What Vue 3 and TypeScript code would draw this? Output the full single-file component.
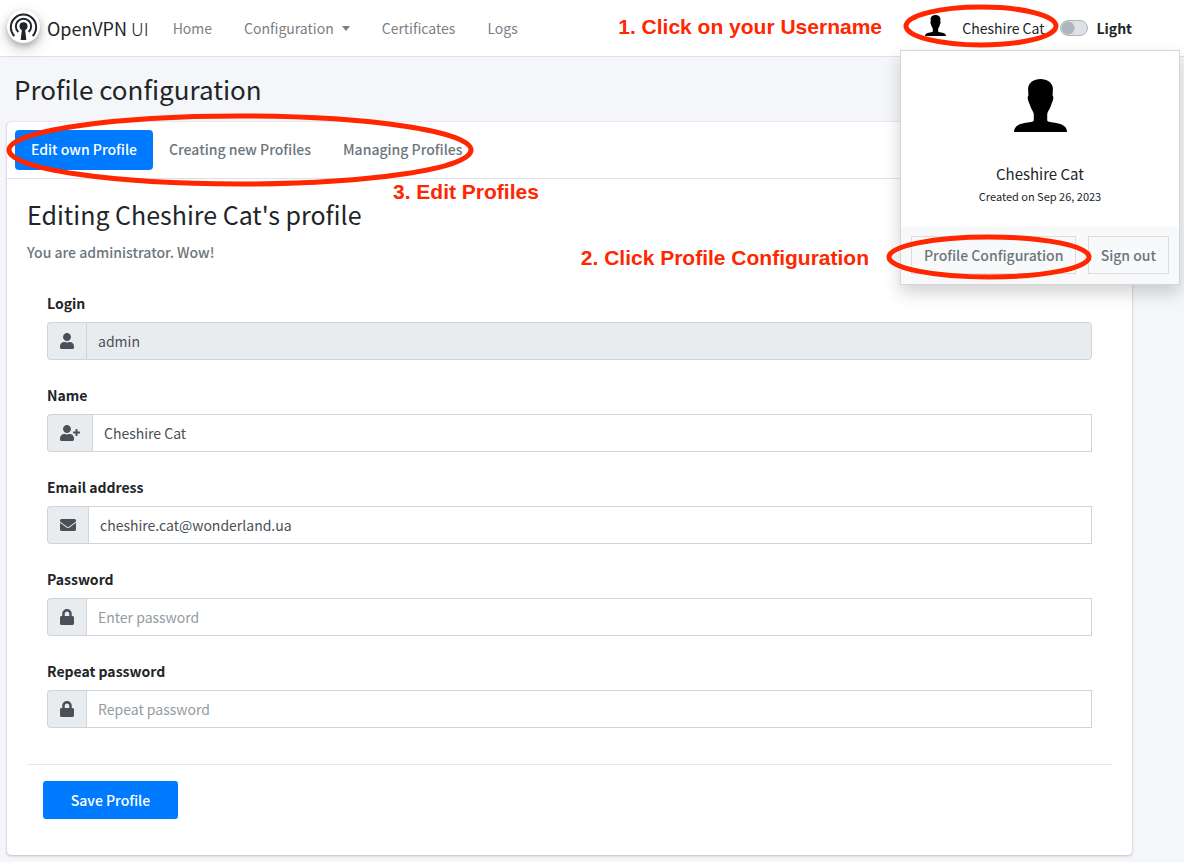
<script setup lang="ts">
import { reactive } from 'vue'

interface Field {
  id: string
  label: string
  icon: 'user' | 'userPlus' | 'envelope' | 'lock'
  type: string
  placeholder?: string
  disabled?: boolean
}

const fields: Field[] = [
  { id: 'login', label: 'Login', icon: 'user', type: 'text', disabled: true },
  { id: 'name', label: 'Name', icon: 'userPlus', type: 'text' },
  { id: 'email', label: 'Email address', icon: 'envelope', type: 'email' },
  { id: 'password', label: 'Password', icon: 'lock', type: 'password', placeholder: 'Enter password' },
  { id: 'repassword', label: 'Repeat password', icon: 'lock', type: 'password', placeholder: 'Repeat password' },
]

const values = reactive<Record<string, string>>({
  login: 'admin',
  name: 'Cheshire Cat',
  email: 'cheshire.cat@wonderland.ua',
  password: '',
  repassword: '',
})

const userPath =
  'M224 256c70.7 0 128-57.3 128-128S294.7 0 224 0 96 57.3 96 128s57.3 128 128 128zm89.6 32h-16.7c-22.2 10.2-46.9 16-72.9 16s-50.6-5.8-72.9-16h-16.7C60.2 288 0 348.2 0 422.4V464c0 26.5 21.5 48 48 48h352c26.5 0 48-21.5 48-48v-41.6c0-74.2-60.2-134.4-134.4-134.4z'

const icons = {
  user: { width: 14, box: '0 0 448 512', path: userPath },
  userPlus: {
    width: 20,
    box: '0 0 640 512',
    path:
      userPath +
      'M624 208h-64v-64c0-8.800-7.200-16-16-16h-32c-8.800 0-16 7.200-16 16v64h-64c-8.800 0-16 7.200-16 16v32c0 8.800 7.200 16 16 16h64v64c0 8.800 7.200 16 16 16h32c8.800 0 16-7.200 16-16v-64h64c8.800 0 16-7.200 16-16v-32c0-8.800-7.200-16-16-16z',
  },
  envelope: {
    width: 16,
    box: '0 0 512 512',
    path: 'M502.3 190.8c3.9-3.1 9.7-.2 9.7 4.7V400c0 26.5-21.5 48-48 48H48c-26.5 0-48-21.5-48-48V195.6c0-5 5.7-7.8 9.7-4.7 22.4 17.4 52.1 39.5 154.1 113.6 21.1 15.4 56.7 47.8 92.2 47.6 35.7.3 72-32.8 92.3-47.6 102-74.1 131.6-96.3 154-113.7zM256 320c23.2.4 56.6-29.2 73.4-41.4 132.7-96.3 142.8-104.7 173.4-128.7 5.8-4.5 9.2-11.5 9.2-18.9v-19c0-26.5-21.5-48-48-48H48c-26.5 0-48 21.5-48 48v19c0 7.4 3.4 14.3 9.2 18.9 30.6 23.9 40.7 32.4 173.4 128.7 16.8 12.2 50.2 41.8 73.4 41.4z',
  },
  lock: {
    width: 14,
    box: '0 0 448 512',
    path: 'M400 224h-24v-72C376 68.2 307.8 0 224 0S72 68.2 72 152v72H48c-26.5 0-48 21.5-48 48v192c0 26.5 21.5 48 48 48h352c26.5 0 48-21.5 48-48V272c0-26.5-21.5-48-48-48zm-104 0H152v-72c0-39.7 32.3-72 72-72s72 32.3 72 72v72z',
  },
}

const avatarPath =
  'M79 0C60 0 42 10 42 30L43 50C40 52 40 58 43 66C45 72 46 72 48 80C52 92 57 96 59 104V124C55 130 40 129 26 133C8 137 0 146 0 158H158C158 146 150 137 132 133C118 129 103 130 99 124V104C101 96 106 92 110 80C112 72 113 72 115 66C118 58 118 52 115 50L116 30C116 10 98 0 79 0Z'
</script>

<template>
  <div class="page">
    <header class="topbar">
      <a class="brand" href="#">
        <svg class="logo" viewBox="0 0 99 99" aria-hidden="true">
          <g fill="none" stroke="#212529" stroke-width="6">
            <path d="M22 78A38 38 0 1 1 77 78" />
            <path d="M34 66A23 23 0 1 1 65 66" />
          </g>
          <circle cx="49.5" cy="49" r="12" fill="#212529" />
          <path d="M45 56H54L58 90H41Z" fill="#212529" />
        </svg>
        <span>OpenVPN <span class="thin">UI</span></span>
      </a>
      <nav class="nav">
        <a href="#">Home</a>
        <a href="#">Configuration<i class="caret"></i></a>
        <a href="#">Certificates</a>
        <a href="#">Logs</a>
      </nav>
      <button class="user" type="button">
        <svg viewBox="0 0 158 158" aria-hidden="true"><path :d="avatarPath" /></svg>
        <span>Cheshire Cat</span>
      </button>
      <label class="theme" for="theme"><input id="theme" type="checkbox" />Light</label>

      <div class="menu">
        <div class="menu-body">
          <svg viewBox="0 0 158 158" aria-hidden="true"><path :d="avatarPath" /></svg>
          <p class="menu-name">Cheshire Cat</p>
          <p class="menu-date">Created on Sep 26, 2023</p>
        </div>
        <div class="menu-footer">
          <a href="#">Profile Configuration</a>
          <a href="#">Sign out</a>
        </div>
      </div>
    </header>

    <main class="content">
      <h1>Profile configuration</h1>
      <section class="card">
        <nav class="pills">
          <a class="active" href="#">Edit own Profile</a>
          <a href="#">Creating new Profiles</a>
          <a href="#">Managing Profiles</a>
        </nav>
        <form class="body" @submit.prevent>
          <h2>Editing Cheshire Cat's profile</h2>
          <p class="hint">You are administrator. Wow!</p>
          <div class="fields">
            <div v-for="f in fields" :key="f.id" class="group">
              <label :for="f.id">{{ f.label }}</label>
              <div class="input-row">
                <span class="addon">
                  <svg :width="icons[f.icon].width" height="16" :viewBox="icons[f.icon].box" aria-hidden="true">
                    <path :d="icons[f.icon].path" />
                  </svg>
                </span>
                <input
                  :id="f.id"
                  v-model="values[f.id]"
                  :class="{ last: f.disabled }"
                  :type="f.type"
                  :placeholder="f.placeholder"
                  :disabled="f.disabled"
                />
              </div>
            </div>
          </div>
          <div class="actions">
            <button type="submit">Save Profile</button>
          </div>
        </form>
      </section>
    </main>

    <div class="notes">
      <svg class="ring ring-user" width="156" height="44"><ellipse cx="78" cy="22" rx="75" ry="19" /></svg>
      <svg class="ring ring-config" width="206" height="46"><ellipse cx="103" cy="23" rx="100" ry="20" /></svg>
      <svg class="ring ring-tabs" width="468" height="74"><ellipse cx="234" cy="37" rx="231" ry="34" /></svg>
      <span class="note note-user">1. Click on your Username</span>
      <span class="note note-config">2. Click Profile Configuration</span>
      <span class="note note-tabs">3. Edit Profiles</span>
    </div>
  </div>
</template>

<style>
body {
  margin: 0;
  background: #f4f6f9;
}
</style>

<style scoped>
.page,
.page * {
  box-sizing: border-box;
}
.page {
  position: relative;
  min-height: 100vh;
  font-family: 'Noto Sans CJK SC', 'Noto Sans', sans-serif;
  font-size: 14px;
  font-weight: 500;
  line-height: 24px;
  color: #212529;
  overflow: hidden;
}
a {
  text-decoration: none;
  color: inherit;
}
h1,
h2,
p {
  margin: 0;
}
button,
input {
  font: inherit;
}

.topbar {
  position: relative;
  z-index: 2;
  display: flex;
  align-items: center;
  height: 57px;
  padding: 0 52px 0 7px;
  background: #fff;
  border-bottom: 1px solid #dee2e6;
}
.brand {
  display: flex;
  align-items: center;
  gap: 7px;
  font-size: 18px;
  font-weight: 400;
  white-space: nowrap;
}
.logo {
  width: 33px;
  height: 33px;
  margin-bottom: 3px;
  border-radius: 50%;
  background: #fff;
  box-shadow: 0 3px 6px rgba(0, 0, 0, 0.23), 0 6px 16px rgba(0, 0, 0, 0.19);
}
.thin {
  font-weight: 300;
}
.nav {
  display: flex;
  gap: 32px;
  margin-left: 24px;
  font-weight: 400;
  color: #7b7f83;
}
.nav a {
  display: flex;
  align-items: center;
}
.caret {
  margin-left: 8px;
  border-top: 5px solid currentColor;
  border-left: 4px solid transparent;
  border-right: 4px solid transparent;
}
.user {
  display: flex;
  align-items: center;
  gap: 16px;
  margin-left: auto;
  padding: 0;
  border: 0;
  background: none;
  color: #212529;
  font-weight: 400;
  white-space: nowrap;
}
.user svg {
  width: 21px;
  height: 21px;
  margin-bottom: 5px;
}
.theme {
  display: flex;
  align-items: center;
  gap: 8px;
  margin-left: 16px;
  font-weight: 700;
}
.theme input {
  appearance: none;
  width: 28px;
  height: 16px;
  margin: 0;
  border: 1px solid #adb5bd;
  border-radius: 8px;
  background: radial-gradient(circle at 7px 7px, #adb5bd 6px, #dee2e6 7px);
}

.menu {
  position: absolute;
  top: 50px;
  right: 4px;
  width: 280px;
  background: #fff;
  border: 1px solid #d4d7da;
  box-shadow: 0 8px 16px rgba(0, 0, 0, 0.175);
}
.menu-body {
  display: flex;
  flex-direction: column;
  align-items: center;
  height: 175px;
  padding-top: 28px;
}
.menu-body svg {
  width: 53px;
  height: 53px;
}
.menu-name {
  margin-top: 30px;
  font-size: 15px;
  font-weight: 400;
}
.menu-date {
  font-size: 11px;
  font-weight: 400;
  line-height: 20px;
}
.menu-footer {
  display: flex;
  justify-content: space-between;
  padding: 10px;
  background: #f8f9fa;
  color: #6c757d;
}
.menu-footer a {
  padding: 6px 12px;
  border: 1px solid #dddddd;
}

.content {
  padding: 16px 52px 7px 7px;
}
h1,
h2 {
  font-size: 25px;
  font-weight: 400;
  line-height: 32px;
}
h1 {
  padding-left: 7px;
  font-size: 26px;
}
.card {
  margin-top: 17px;
  background: #fff;
  border-radius: 4px;
  box-shadow: 0 0 1px rgba(0, 0, 0, 0.25), 0 1px 3px rgba(0, 0, 0, 0.2);
}
.pills {
  display: flex;
  padding: 8px;
  border-bottom: 1px solid #dee2e6;
  color: #6c757d;
}
.pills a {
  padding: 7px 16px 9px;
  border-radius: 4px;
}
.pills .active {
  background: #007bff;
  color: #fff;
}
.body {
  padding: 19px 20px 36px;
}
.hint {
  margin-top: 10px;
  color: #6c757d;
}
.fields {
  padding: 27px 20px 36px;
}
.group + .group {
  margin-top: 23px;
}
.group label {
  display: block;
  margin-bottom: 7px;
  font-weight: 700;
}
.input-row {
  display: flex;
}
.addon {
  display: flex;
  align-items: center;
  padding: 0 12px;
  border: 1px solid #ced4da;
  border-right: 0;
  border-radius: 4px 0 0 4px;
  background: #e9ecef;
}
.addon svg {
  fill: #495057;
}
.input-row input {
  flex: 1;
  min-width: 0;
  height: 38px;
  padding: 0 12px 0 11px;
  border: 1px solid #ced4da;
  border-radius: 0;
  background: #fff;
  color: #495057;
  font-weight: 400;
  outline: 0;
}
.input-row .last {
  border-radius: 0 4px 4px 0;
  background: #e9ecef;
}
.input-row input::placeholder {
  color: #939ba2;
  opacity: 1;
}
.actions {
  padding: 16px 16px 0;
  border-top: 1px solid #e5e7e9;
}
.actions button {
  min-width: 135px;
  height: 38px;
  border: 0;
  border-radius: 3px;
  background: #007bff;
  color: #fff;
}

.notes {
  position: absolute;
  inset: 0;
  z-index: 3;
  pointer-events: none;
}
.ring {
  position: absolute;
  fill: none;
  stroke: #ff2600;
  stroke-width: 5px;
}
.ring-user {
  top: 4px;
  right: 125px;
}
.ring-config {
  top: 234px;
  right: 92px;
}
.ring-tabs {
  top: 113px;
  left: 6px;
}
.note {
  position: absolute;
  font-family: 'Liberation Sans', Arial, sans-serif;
  font-size: 21px;
  font-weight: 700;
  color: #ff2600;
  white-space: nowrap;
}
.note-user {
  top: 15px;
  right: 302px;
}
.note-config {
  top: 246px;
  right: 315px;
}
.note-tabs {
  top: 180px;
  left: 393px;
}
</style>
